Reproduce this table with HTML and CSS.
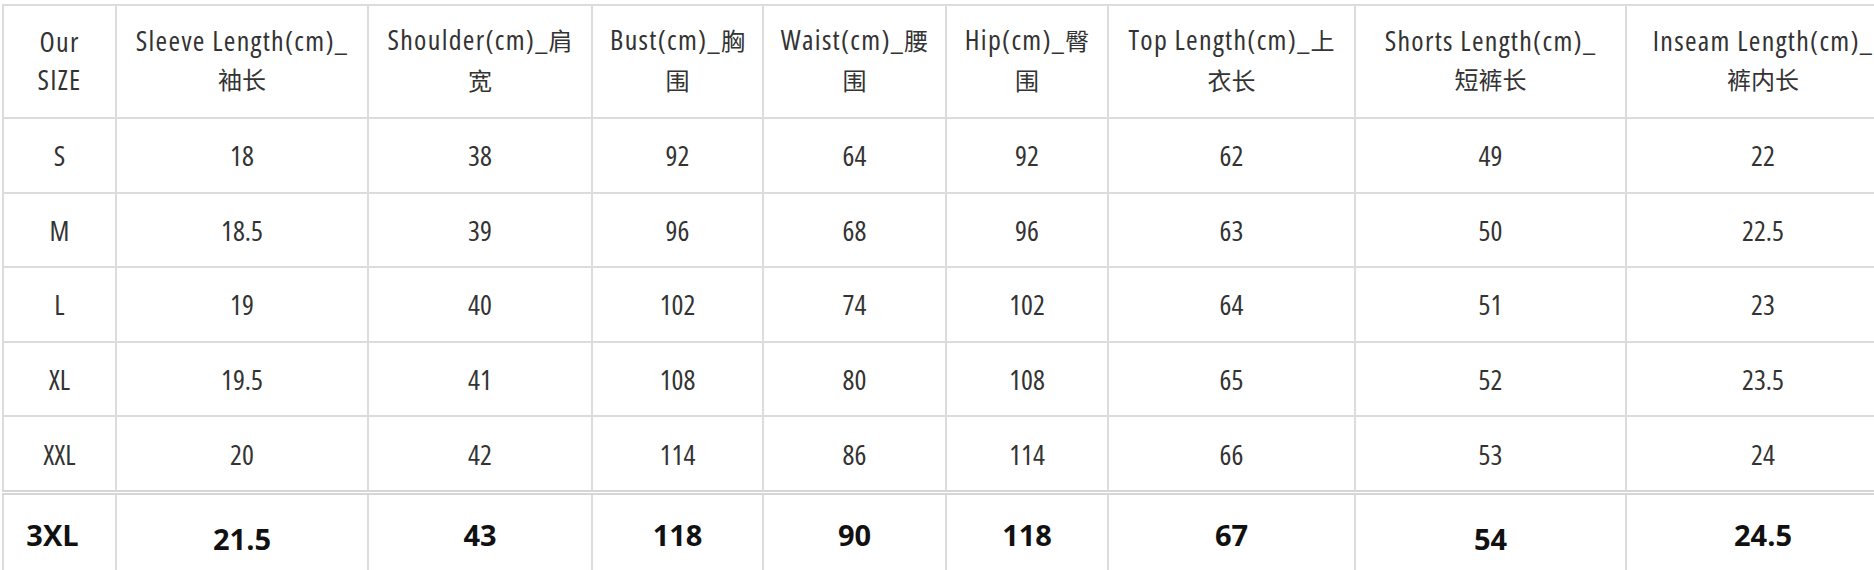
FILE: index.html
```html
<!DOCTYPE html>
<html lang="en">
<head>
<meta charset="utf-8">
<title>Size Chart</title>
<link rel="stylesheet" href="styles.css">
</head>
<body>
<table class="chart">
  <colgroup>
    <col class="c-size">
    <col class="c-sleeve">
    <col class="c-shoulder">
    <col class="c-bust">
    <col class="c-waist">
    <col class="c-hip">
    <col class="c-top">
    <col class="c-shorts">
    <col class="c-inseam">
  </colgroup>
  <thead>
    <tr class="head">
      <th>Our<br>SIZE</th>
      <th>Sleeve Length(cm)_<br><span class="zh">袖长</span></th>
      <th>Shoulder(cm)_<span class="zh">肩</span><br><span class="zh">宽</span></th>
      <th>Bust(cm)_<span class="zh">胸</span><br><span class="zh">围</span></th>
      <th>Waist(cm)_<span class="zh">腰</span><br><span class="zh">围</span></th>
      <th>Hip(cm)_<span class="zh">臀</span><br><span class="zh">围</span></th>
      <th>Top Length(cm)_<span class="zh">上</span><br><span class="zh">衣长</span></th>
      <th>Shorts Length(cm)_<br><span class="zh">短裤长</span></th>
      <th>Inseam Length(cm)_<br><span class="zh">裤内长</span></th>
    </tr>
  </thead>
  <tbody>
    <tr><td>S</td><td>18</td><td>38</td><td>92</td><td>64</td><td>92</td><td>62</td><td>49</td><td>22</td></tr>
    <tr><td>M</td><td>18.5</td><td>39</td><td>96</td><td>68</td><td>96</td><td>63</td><td>50</td><td>22.5</td></tr>
    <tr><td>L</td><td>19</td><td>40</td><td>102</td><td>74</td><td>102</td><td>64</td><td>51</td><td>23</td></tr>
    <tr><td>XL</td><td>19.5</td><td>41</td><td>108</td><td>80</td><td>108</td><td>65</td><td>52</td><td>23.5</td></tr>
    <tr><td>XXL</td><td>20</td><td>42</td><td>114</td><td>86</td><td>114</td><td>66</td><td>53</td><td>24</td></tr>
    <tr class="big"><td class="first">3XL</td><td class="low">21.5</td><td>43</td><td>118</td><td>90</td><td>118</td><td>67</td><td class="low">54</td><td>24.5</td></tr>
  </tbody>
</table>
</body>
</html>
```
FILE: styles.css
```css
html {
  overflow: hidden;
  background: #ffffff;
}
body {
  margin: 0;
  padding: 4px 0 0 2px;
}
.chart {
  border-collapse: collapse;
  table-layout: fixed;
  width: 1897px;
  font-family: "Open Sans", "Noto Sans CJK SC", sans-serif;
  font-size: 28px;
  font-weight: 400;
  font-stretch: 75%;
  color: #333333;
  border: 2px solid #dcdcdc;
}
.c-size { width: 113px; }
.c-sleeve { width: 252px; }
.c-shoulder { width: 224px; }
.c-bust { width: 171px; }
.c-waist { width: 183px; }
.c-hip { width: 162px; }
.c-top { width: 247px; }
.c-shorts { width: 271px; }
.c-inseam { width: 274px; }

.chart th,
.chart td {
  border: 2px solid #dcdcdc;
  text-align: center;
  vertical-align: middle;
  padding: 0;
  white-space: nowrap;
}
.chart th {
  font-weight: 400;
  letter-spacing: 1.3px;
  height: 108px;
  line-height: 38px;
  padding-bottom: 3px;
}
.chart td {
  height: 72.6px;
  line-height: 38px;
}
.zh {
  font-size: 24px;
  font-weight: 400;
  letter-spacing: 0;
}
.big td {
  border-top: 5px double #d6d6d6;
  font-weight: 700;
  font-stretch: 100%;
  font-size: 29px;
  color: #111111;
  height: 72px;
}
.big td.low {
  padding-top: 8px;
}
.big td.first {
  padding-right: 14px;
}
```
